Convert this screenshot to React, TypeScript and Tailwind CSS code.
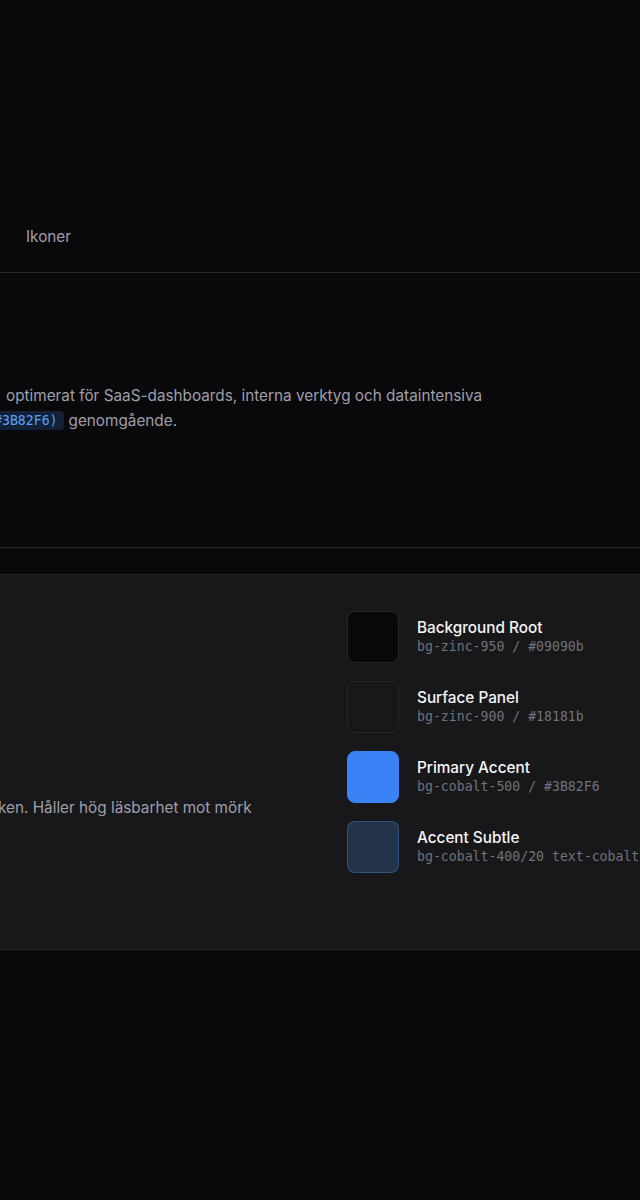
const swatches = [
  { name: "Background Root", token: "bg-zinc-950 / #09090b", box: "bg-[#09090b] border-zinc-800" },
  { name: "Surface Panel", token: "bg-zinc-900 / #18181b", box: "bg-[#18181b] border-zinc-800" },
  { name: "Primary Accent", token: "bg-cobalt-500 / #3B82F6", box: "bg-[#3B82F6] border-[#3B82F6]" },
  { name: "Accent Subtle", token: "bg-cobalt-400/20 text-cobalt-300", box: "bg-blue-400/20 border-blue-400/30" },
]

export default function App() {
  return (
    <div className="w-[640px] min-h-[1200px] overflow-hidden bg-[#09090b] font-['Inter','Liberation_Sans',sans-serif] text-zinc-400">
      {/* Top nav */}
      <nav className="border-b border-zinc-800 pt-[227px] pb-[25px] pl-[26px] text-[15.3px] leading-5">
        <span className="block text-zinc-400">Ikoner</span>
      </nav>

      {/* Intro */}
      <section className="border-b border-zinc-800 pt-[110px] pb-[114px] text-[15.3px] leading-[25px] whitespace-nowrap">
        <div className="pl-[6px]">optimerat för SaaS-dashboards, interna verktyg och dataintensiva</div>
        <div className="-ml-3 flex items-center">
          <code className="rounded bg-[#142036] px-[6px] font-['DejaVu_Sans_Mono','Liberation_Mono',monospace] text-[13.2px] leading-[19px] text-blue-400">
            #3B82F6)
          </code>
          <span className="ml-[5px]">genomgående.</span>
        </div>
      </section>

      {/* Palette panel */}
      <section className="mt-[26px] border-y border-zinc-800 bg-[#18181b] pt-[36px] pb-[76px]">
        <div className="flex">
          <div className="w-[347px] shrink-0 overflow-hidden pt-[184px] text-[15.3px] leading-[25px] whitespace-nowrap">
            <div className="-ml-[2px]">ken. Håller hög läsbarhet mot mörk</div>
          </div>
          <div className="flex flex-col gap-[18px]">
            {swatches.map((s) => (
              <div key={s.name} className="flex items-center gap-[18px]">
                <div className={`h-[52px] w-[52px] shrink-0 rounded-lg border ${s.box}`} />
                <div className="whitespace-nowrap">
                  <div className="text-[15.3px] font-medium leading-5 text-zinc-100">{s.name}</div>
                  <div className="font-['DejaVu_Sans_Mono','Liberation_Mono',monospace] text-[13.2px] leading-[18px] text-zinc-500">
                    {s.token}
                  </div>
                </div>
              </div>
            ))}
          </div>
        </div>
      </section>
    </div>
  )
}
